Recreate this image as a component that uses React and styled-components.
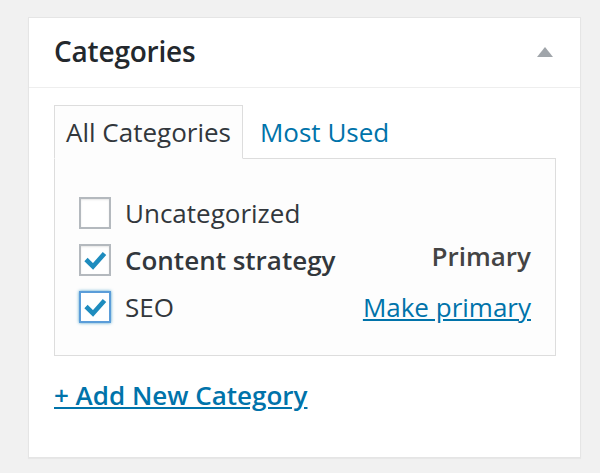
import React from "react";
import styled, { createGlobalStyle } from "styled-components";

const GlobalStyle = createGlobalStyle`
  html, body {
    margin: 0;
    padding: 0;
    background: #f1f1f1;
    font-family: "Open Sans", "Noto Sans", sans-serif;
  }
`;

const categories = [
  { name: "Uncategorized", checked: false },
  { name: "Content strategy", checked: true, primary: true },
  { name: "SEO", checked: true, focused: true },
];

const Check = () => (
  <svg width="28" height="28" viewBox="0 0 28 28" style={{ display: "block" }}>
    <path
      d="M5 13.5 L12 20.5 L23.5 7.5"
      fill="none"
      stroke="#1e8cbe"
      strokeWidth="4.6"
      strokeLinecap="butt"
      strokeLinejoin="miter"
    />
  </svg>
);

const App = () => {
  return (
    <>
      <GlobalStyle />
      <Page>
        <Postbox>
          <Header>
            <Title>Categories</Title>
            <Toggle aria-label="Toggle panel" />
          </Header>
          <Inside>
            <Tabs>
              <Tab active>All Categories</Tab>
              <Tab>Most Used</Tab>
            </Tabs>
            <TabPanel>
              {categories.map((cat) => (
                <Row key={cat.name}>
                  <Label bold={cat.primary}>
                    <Box focused={cat.focused}>{cat.checked && <Check />}</Box>
                    {cat.name}
                  </Label>
                  {cat.checked &&
                    (cat.primary ? (
                      <PrimaryTag>Primary</PrimaryTag>
                    ) : (
                      <MakePrimary href="#">Make primary</MakePrimary>
                    ))}
                </Row>
              ))}
            </TabPanel>
            <AddNew href="#">+ Add New Category</AddNew>
          </Inside>
        </Postbox>
      </Page>
    </>
  );
};

export default App;

const Page = styled.div`
  padding: 17px 19px 15px 28px;
`;

const Postbox = styled.div`
  box-sizing: border-box;
  width: 553px;
  height: 441px;
  background: #fff;
  border: 1px solid #e5e5e5;
  box-shadow: 0 1px 1px rgba(0, 0, 0, 0.04);
`;

const Header = styled.div`
  display: flex;
  align-items: center;
  justify-content: space-between;
  height: 69px;
  padding: 0 27px 0 25px;
  border-bottom: 1px solid #eeeeee;
`;

const Title = styled.h2`
  margin: -3px 0 0;
  font-size: 28px;
  font-weight: 600;
  color: #23282d;
  letter-spacing: -0.2px;
`;

const Toggle = styled.span`
  width: 0;
  height: 0;
  border-left: 8px solid transparent;
  border-right: 8px solid transparent;
  border-bottom: 10px solid #a0a5aa;
  margin-top: -2px;
`;

const Inside = styled.div`
  padding: 17px 24px 0 25px;
`;

const Tabs = styled.div`
  display: flex;
  align-items: flex-end;
`;

const Tab = styled.div`
  box-sizing: border-box;
  height: 54px;
  display: flex;
  align-items: center;
  padding: 0 11px;
  margin-right: 5px;
  margin-bottom: -1px;
  font-size: 26px;
  color: ${(p) => (p.active ? "#32373c" : "#0073aa")};
  background: ${(p) => (p.active ? "#fdfdfd" : "transparent")};
  border: 1px solid ${(p) => (p.active ? "#dddddd" : "transparent")};
  border-bottom-color: ${(p) => (p.active ? "#fdfdfd" : "transparent")};
  position: relative;
  z-index: 1;
`;

const TabPanel = styled.div`
  box-sizing: border-box;
  height: 198px;
  background: #fdfdfd;
  border: 1px solid #dddddd;
  padding: 38px 24px 0 24px;
  display: flex;
  flex-direction: column;
  gap: 15px;
`;

const Row = styled.div`
  display: flex;
  align-items: center;
  justify-content: space-between;
  height: 32px;
`;

const Label = styled.label`
  display: flex;
  align-items: center;
  gap: 14px;
  font-size: 26px;
  font-weight: ${(p) => (p.bold ? 600 : 400)};
  color: #32373c;
`;

const Box = styled.span`
  box-sizing: border-box;
  width: 32px;
  height: 32px;
  display: flex;
  align-items: center;
  justify-content: center;
  background: #fff;
  border: 2px solid ${(p) => (p.focused ? "#5b9dd9" : "#b4b9be")};
  box-shadow: ${(p) =>
    p.focused
      ? "0 0 3px rgba(30, 140, 190, 0.8)"
      : "inset 0 1px 2px rgba(0, 0, 0, 0.1)"};
`;

const PrimaryTag = styled.span`
  font-size: 26px;
  font-weight: 600;
  color: #444;
  margin-top: -8px;
`;

const MakePrimary = styled.a`
  font-size: 26px;
  color: #0073aa;
  text-decoration: underline;
`;

const AddNew = styled.a`
  display: inline-block;
  margin-top: 21px;
  font-size: 26px;
  font-weight: 600;
  color: #0073aa;
  text-decoration: underline;
`;
